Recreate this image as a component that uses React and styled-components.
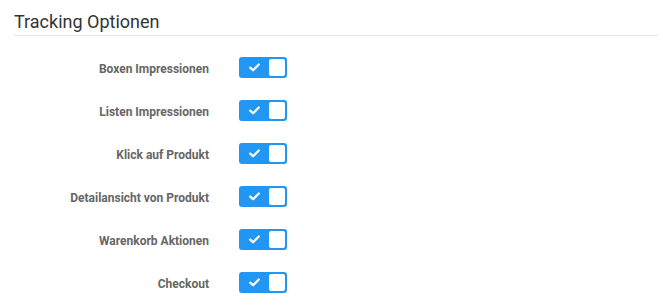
import React, { useState } from "react";
import styled, { createGlobalStyle } from "styled-components";

const Global = createGlobalStyle`
  html, body { margin: 0; padding: 0; background: #fff; }
  body { font-family: Roboto, "Liberation Sans", Arial, sans-serif; }
`;

const Page = styled.div`
  padding: 0 5px 0 14px;
`;

const Title = styled.h3`
  margin: 0;
  padding-top: 9px;
  height: 26px;
  font-size: 18px;
  font-weight: 400;
  line-height: 25px;
  color: #333;
  border-bottom: 1px solid #e5e5e5;
`;

const Form = styled.div`
  padding-top: 9px;
  display: flex;
  flex-direction: column;
`;

const Row = styled.div`
  display: grid;
  grid-template-columns: 195px auto;
  column-gap: 30px;
  align-items: center;
  height: 43px;
`;

const Label = styled.label`
  text-align: right;
  font-size: 12px;
  font-weight: 700;
  color: #666;
  margin-top: 4px;
`;

const Switch = styled.button`
  position: relative;
  display: block;
  width: 48px;
  height: 21px;
  padding: 0;
  border: none;
  border-radius: 3px;
  background: ${(p) => (p.$on ? "#2196f3" : "#ccc")};
  cursor: pointer;
  margin-top: 1px;
`;

const Knob = styled.span`
  position: absolute;
  top: 2px;
  left: ${(p) => (p.$on ? "30px" : "2px")};
  width: 16px;
  height: 17px;
  border-radius: 2px;
  background: #fff;
`;

const Check = styled.svg`
  position: absolute;
  left: 10px;
  top: 6px;
`;

const options = [
  "Boxen Impressionen",
  "Listen Impressionen",
  "Klick auf Produkt",
  "Detailansicht von Produkt",
  "Warenkorb Aktionen",
  "Checkout",
];

function Toggle() {
  const [on, setOn] = useState(true);
  return (
    <Switch $on={on} onClick={() => setOn(!on)}>
      {on && (
        <Check width="11" height="9" viewBox="0 0 11 9">
          <path d="M1.2 4.6 L4.1 7.3 L9.8 1.5" fill="none" stroke="#fff" strokeWidth="2.2" strokeLinecap="round" strokeLinejoin="round" />
        </Check>
      )}
      <Knob $on={on} />
    </Switch>
  );
}

export default function App() {
  return (
    <Page>
      <Global />
      <Title>Tracking Optionen</Title>
      <Form>
        {options.map((o) => (
          <Row key={o}>
            <Label>{o}</Label>
            <div><Toggle /></div>
          </Row>
        ))}
      </Form>
    </Page>
  );
}
